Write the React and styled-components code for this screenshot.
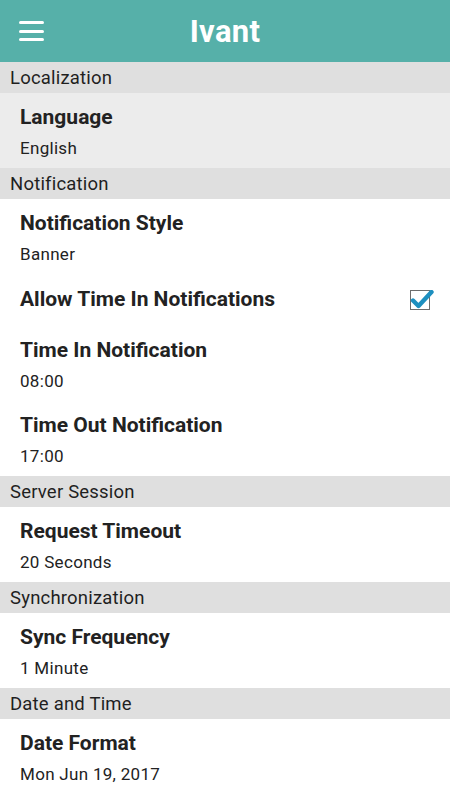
import React from "react";
import styled, { createGlobalStyle } from "styled-components";

const GlobalStyle = createGlobalStyle`
  body {
    margin: 0;
    background: #ffffff;
    font-family: Roboto, "Liberation Sans", sans-serif;
  }
`;

const StyledPage = styled.div`
  width: 450px;
  height: 800px;
  overflow: hidden;
  background: #ffffff;
`;

const StyledAppBar = styled.header`
  height: 62px;
  background: #56b0a9;
  display: grid;
  grid-template-columns: 62px 1fr 62px;
  align-items: center;
`;

const StyledMenuButton = styled.div`
  display: flex;
  flex-direction: column;
  gap: 5.5px;
  padding-left: 19px;

  span {
    display: block;
    width: 25px;
    height: 3px;
    border-radius: 2px;
    background: #ffffff;
  }
`;

const StyledTitle = styled.h1`
  margin: 0;
  text-align: center;
  color: #ffffff;
  font-size: 31px;
  font-weight: 700;
  letter-spacing: 0.3px;
`;

const StyledSectionHeader = styled.div`
  height: 31px;
  display: flex;
  align-items: center;
  padding-left: 10px;
  background: #dfdfdf;
  color: #1f1f1f;
  font-size: 18.5px;
  letter-spacing: 0.2px;
`;

const StyledItem = styled.div`
  height: ${({ compact }) => (compact ? "52px" : "75px")};
  display: flex;
  align-items: center;
  justify-content: space-between;
  padding: ${({ compact }) => (compact ? "0 20px 3px 20px" : "2px 20px 0 20px")};
  background: ${({ pressed }) => (pressed ? "#ececec" : "#ffffff")};
  box-sizing: border-box;
`;

const StyledItemText = styled.div`
  display: flex;
  flex-direction: column;
  gap: 9px;
`;

const StyledItemTitle = styled.div`
  font-size: 21px;
  font-weight: 700;
  color: #222222;
  line-height: 24px;
`;

const StyledItemValue = styled.div`
  font-size: 17px;
  color: #222222;
  line-height: 20px;
  letter-spacing: 0.3px;
`;

const StyledCheckbox = styled.div`
  position: relative;
  width: 18px;
  height: 18px;
  border: 1px solid #6d6d6d;
  margin-top: 3px;

  svg {
    position: absolute;
    left: -1px;
    top: -1px;
  }
`;

const Check = () => (
  <StyledCheckbox>
    <svg width="26" height="20" viewBox="0 0 26 20">
      <path
        d="M3 10.5 L8.5 16 L21.5 2"
        fill="none"
        stroke="#1d8fbf"
        strokeWidth="4.4"
        strokeLinecap="round"
        strokeLinejoin="round"
      />
    </svg>
  </StyledCheckbox>
);

const sections = [
  {
    name: "Localization",
    items: [{ title: "Language", value: "English", pressed: true }],
  },
  {
    name: "Notification",
    items: [
      { title: "Notification Style", value: "Banner" },
      { title: "Allow Time In Notifications", checkbox: true },
      { title: "Time In Notification", value: "08:00" },
      { title: "Time Out Notification", value: "17:00" },
    ],
  },
  {
    name: "Server Session",
    items: [{ title: "Request Timeout", value: "20 Seconds" }],
  },
  {
    name: "Synchronization",
    items: [{ title: "Sync Frequency", value: "1 Minute" }],
  },
  {
    name: "Date and Time",
    items: [{ title: "Date Format", value: "Mon Jun 19, 2017" }],
  },
];

const App = () => (
  <>
    <GlobalStyle />
    <StyledPage>
      <StyledAppBar>
        <StyledMenuButton>
          <span />
          <span />
          <span />
        </StyledMenuButton>
        <StyledTitle>Ivant</StyledTitle>
        <div />
      </StyledAppBar>
      {sections.map((section) => (
        <section key={section.name}>
          <StyledSectionHeader>{section.name}</StyledSectionHeader>
          {section.items.map((item) => (
            <StyledItem key={item.title} pressed={item.pressed} compact={item.checkbox}>
              <StyledItemText>
                <StyledItemTitle>{item.title}</StyledItemTitle>
                {item.value && <StyledItemValue>{item.value}</StyledItemValue>}
              </StyledItemText>
              {item.checkbox && <Check />}
            </StyledItem>
          ))}
        </section>
      ))}
    </StyledPage>
  </>
);

export default App;
